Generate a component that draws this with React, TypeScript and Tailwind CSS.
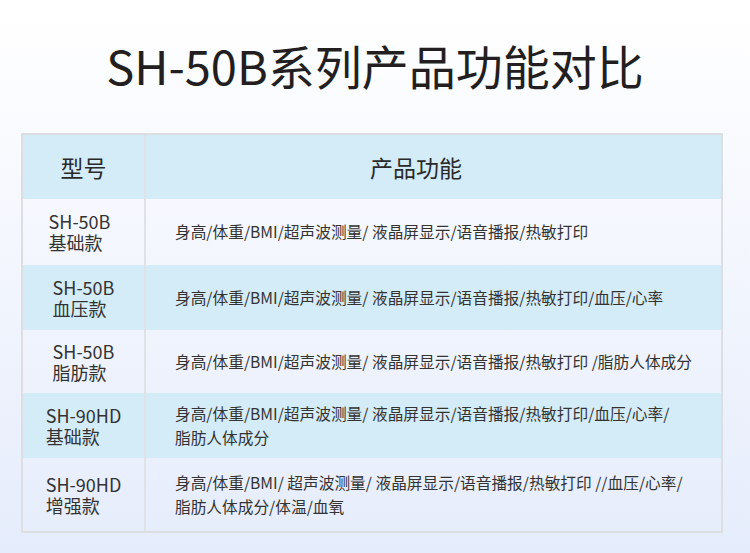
import React from "react";

const rows: { model: [string, string]; lines: string[]; h: string; blue: boolean; shift?: string }[] = [
  { model: ["SH-50B", "基础款"], lines: ["身高/体重/BMI/超声波测量/ 液晶屏显示/语音播报/热敏打印"], h: "h-[66px]", blue: false, shift: "-translate-x-[4px]" },
  { model: ["SH-50B", "血压款"], lines: ["身高/体重/BMI/超声波测量/ 液晶屏显示/语音播报/热敏打印/血压/心率"], h: "h-[65px]", blue: true },
  { model: ["SH-50B", "脂肪款"], lines: ["身高/体重/BMI/超声波测量/ 液晶屏显示/语音播报/热敏打印 /脂肪人体成分"], h: "h-[63px]", blue: false },
  { model: ["SH-90HD", "基础款"], lines: ["身高/体重/BMI/超声波测量/ 液晶屏显示/语音播报/热敏打印/血压/心率/", "脂肪人体成分"], h: "h-[65px]", blue: true },
  { model: ["SH-90HD", "增强款"], lines: ["身高/体重/BMI/ 超声波测量/ 液晶屏显示/语音播报/热敏打印 //血压/心率/", "脂肪人体成分/体温/血氧"], h: "h-[73px]", blue: false },
];

export default function App() {
  return (
    <div
      className="w-[750px] h-[553px] overflow-hidden bg-gradient-to-b from-white to-[#e5ecfb] text-[#2b2b2b]"
      style={{ fontFamily: '"Noto Sans CJK SC", "Noto Sans", sans-serif' }}
    >
      <div className="h-[133px] flex items-center justify-center pb-[4px]">
        <h1 className="text-[47px] leading-none font-normal text-[#231f20]">SH-50B系列产品功能对比</h1>
      </div>
      <div className="ml-[21px] w-[702px] border-2 border-[#dcdee2] flex flex-col">
        <div className="flex h-[64px] bg-[#d4ebf8]">
          <div className="w-[121px] flex items-center justify-center text-[23px] text-[#2a2a2a]">型号</div>
          <div className="w-[2px] bg-[#dfe3e8]" />
          <div className="flex-1 flex items-center justify-center pr-[35px] text-[23px] text-[#2a2a2a]">产品功能</div>
        </div>
        {rows.map((r, i) => (
          <div key={i} className={`flex ${r.h} ${r.blue ? "bg-[#d4ebf8]" : ""}`}>
            <div className="w-[121px] flex items-center justify-center">
              <div className={`text-[18px] leading-[21px] text-[#333] ${r.shift ?? ""}`}>
                <div>{r.model[0]}</div>
                <div>{r.model[1]}</div>
              </div>
            </div>
            <div className="w-[2px] bg-[#dfe3e8]" />
            <div className="flex-1 flex flex-col justify-center pl-[29px] text-[15.7px] leading-[24px] text-[#333] whitespace-nowrap">
              {r.lines.map((l, j) => (
                <div key={j}>{l}</div>
              ))}
            </div>
          </div>
        ))}
      </div>
    </div>
  );
}
